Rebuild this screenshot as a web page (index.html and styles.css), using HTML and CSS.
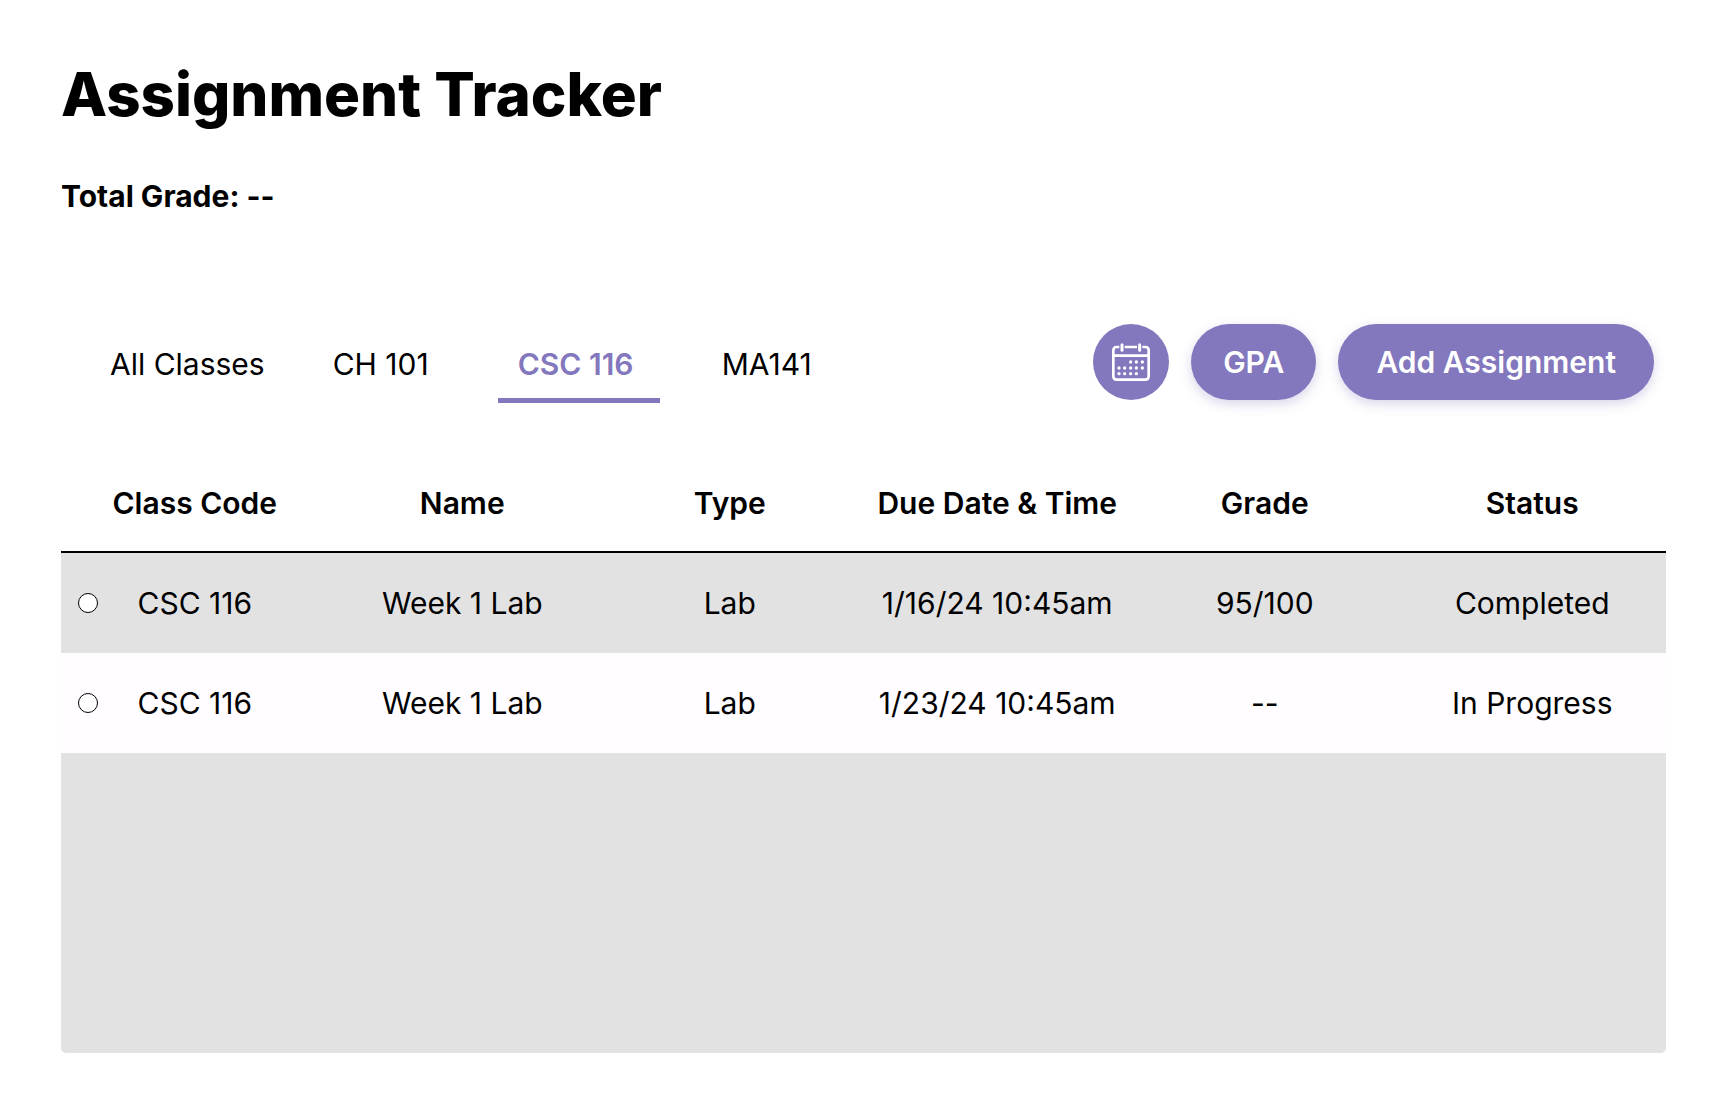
FILE: index.html
```html
<!DOCTYPE html>
<html lang="en">
<head>
<meta charset="utf-8">
<meta name="viewport" content="width=device-width, initial-scale=1">
<title>Assignment Tracker</title>
<link rel="stylesheet" href="styles.css">
</head>
<body>
<main class="page">
  <h1 class="title">Assignment Tracker</h1>
  <p class="total">Total Grade: --</p>

  <div class="toolbar">
    <nav class="tabs" aria-label="Classes">
      <a class="tab tab-all" href="#all">All Classes</a>
      <a class="tab" href="#ch101">CH 101</a>
      <a class="tab tab-active" href="#csc116" aria-current="page">CSC 116</a>
      <a class="tab" href="#ma141">MA141</a>
    </nav>
    <div class="actions">
      <button class="button button-icon" type="button" aria-label="Calendar">
        <svg class="calendar" viewBox="0 0 114 114" aria-hidden="true">
          <g fill="none" stroke="currentColor" stroke-width="8">
            <path d="M22 12H14Q4 12 4 22V100Q4 110 14 110H100Q110 110 110 100V22Q110 12 100 12H91M38 12H75"/>
            <path d="M4 38H110"/>
            <path d="M30 5V22M83 5V22" stroke-width="9" stroke-linecap="round"/>
          </g>
          <g fill="currentColor">
            <circle cx="56" cy="57" r="5"/><circle cx="73" cy="57" r="5"/><circle cx="91" cy="57" r="5"/>
            <circle cx="21" cy="75" r="5"/><circle cx="38" cy="75" r="5"/><circle cx="56" cy="75" r="5"/><circle cx="73" cy="75" r="5"/><circle cx="91" cy="75" r="5"/>
            <circle cx="21" cy="92" r="5"/><circle cx="38" cy="92" r="5"/><circle cx="56" cy="92" r="5"/><circle cx="73" cy="92" r="5"/>
          </g>
        </svg>
      </button>
      <button class="button button-raised" type="button">GPA</button>
      <button class="button button-raised button-wide" type="button">Add Assignment</button>
    </div>
  </div>

  <div class="sheet">
    <table class="assignments">
      <thead>
        <tr>
          <th scope="col">Class Code</th>
          <th scope="col">Name</th>
          <th scope="col">Type</th>
          <th scope="col">Due Date &amp; Time</th>
          <th scope="col">Grade</th>
          <th scope="col">Status</th>
        </tr>
      </thead>
      <tbody>
        <tr>
          <td><label class="pick"><input class="radio" type="radio" name="assignment"><span class="code">CSC 116</span></label></td>
          <td>Week 1 Lab</td>
          <td>Lab</td>
          <td>1/16/24 10:45am</td>
          <td>95/100</td>
          <td>Completed</td>
        </tr>
        <tr>
          <td><label class="pick"><input class="radio" type="radio" name="assignment"><span class="code">CSC 116</span></label></td>
          <td>Week 1 Lab</td>
          <td>Lab</td>
          <td>1/23/24 10:45am</td>
          <td>--</td>
          <td>In Progress</td>
        </tr>
      </tbody>
    </table>
  </div>
</main>
</body>
</html>
```

FILE: styles.css
```css
* {
  box-sizing: border-box;
}

body {
  margin: 0;
  background: #fff;
  color: #000;
  font: 400 30px/36px Inter, "Liberation Sans", sans-serif;
}

.page {
  padding: 58px 62px 64px 61px;
}

.title {
  margin: 0;
  font-size: 60px;
  line-height: 72px;
  font-weight: 800;
}

.total {
  margin: 48px 0 0;
  font-weight: 700;
}

.toolbar {
  display: flex;
  justify-content: space-between;
  align-items: flex-start;
  margin-top: 110px;
  padding: 0 12px 0 43px;
}

.tabs {
  display: flex;
  gap: 42px;
  padding-top: 22px;
}

.tab {
  min-width: 143px;
  padding: 0 20px 16px;
  border-bottom: 5px solid transparent;
  color: inherit;
  text-decoration: none;
  white-space: nowrap;
}

.tab-all {
  padding-left: 6px;
  padding-right: 6px;
}

.tab-active {
  min-width: 162px;
  border-color: #8377bd;
  color: #8377bd;
  font-weight: 600;
}

.actions {
  display: flex;
  gap: 22px;
}

.button {
  height: 76px;
  padding: 0 32px;
  border: 0;
  border-radius: 38px;
  background: #8377bd;
  color: #fff;
  font: inherit;
  font-weight: 600;
  white-space: nowrap;
  cursor: pointer;
}

.button-icon {
  display: flex;
  align-items: center;
  justify-content: center;
  width: 76px;
  padding: 0;
}

.button-raised {
  box-shadow: 0 4px 12px rgba(100, 90, 170, 0.25);
}

.button-wide {
  padding: 0 38px;
}

.calendar {
  width: 38px;
  height: 38px;
}

.sheet {
  min-height: 598px;
  margin-top: 52px;
  border-radius: 0 0 5px 5px;
  background: #e2e2e2;
  overflow: hidden;
}

.assignments {
  width: 100%;
  table-layout: fixed;
  border-collapse: separate;
  border-spacing: 0;
  text-align: center;
}

.assignments th {
  height: 98px;
  padding: 0;
  border-bottom: 2px solid #000;
  background: #fff;
  font-weight: 600;
}

.assignments td {
  height: 100px;
  padding: 0;
}

.assignments tbody tr:nth-child(even) {
  background: #fffdff;
}

.pick {
  display: flex;
  align-items: center;
  padding: 0 37px 0 17px;
}

.radio {
  appearance: none;
  flex: none;
  width: 20px;
  height: 20px;
  margin: 0;
  border: 1px solid #000;
  border-radius: 50%;
  background: #fff;
}

.radio:checked {
  background: #8377bd;
}

.code {
  flex: 1;
}
```
